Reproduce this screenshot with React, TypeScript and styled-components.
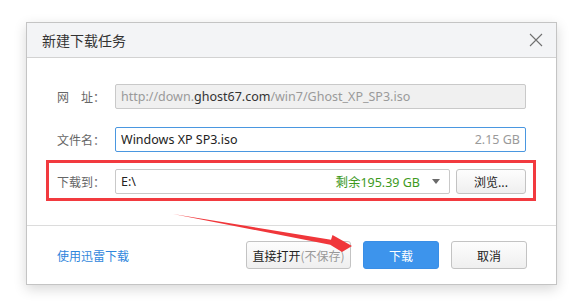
import styled, { createGlobalStyle } from "styled-components";

const GlobalStyle = createGlobalStyle`
  html, body {
    margin: 0;
    padding: 0;
    background: #ffffff;
  }
  body {
    font-family: "Noto Sans", "Noto Sans CJK SC", sans-serif;
    font-size: 12px;
    color: #333;
  }
`;

const Page = styled.div`
  position: relative;
  width: 580px;
  height: 307px;
  padding: 22px 0 0 26px;
  box-sizing: border-box;
`;

const Dialog = styled.div`
  width: 531px;
  height: 263px;
  box-sizing: border-box;
  border: 1px solid #c4c4c4;
  background: #fff;
  box-shadow: 0 4px 12px rgba(0, 0, 0, 0.16);
  display: flex;
  flex-direction: column;
`;

const TitleBar = styled.div`
  height: 34px;
  background: #f3f4f6;
  border-bottom: 1px solid #d2d2d2;
  display: flex;
  align-items: center;
  justify-content: space-between;
  padding: 0 13px 0 15px;
`;

const Title = styled.span`
  font-family: "Noto Sans CJK SC", sans-serif;
  font-size: 14px;
  color: #333;
`;

const CloseButton = styled.button`
  border: none;
  background: none;
  padding: 0;
  width: 14px;
  height: 14px;
  display: flex;
  cursor: pointer;
`;

const Body = styled.div`
  flex: 1;
  padding: 26px 30px 0 30px;
  display: flex;
  flex-direction: column;
`;

const Row = styled.div<{ $highlight?: boolean }>`
  display: flex;
  align-items: center;
  margin-top: ${(p) => (p.$highlight ? "8px" : "0")};
  margin-bottom: ${(p) => (p.$highlight ? "0" : "18px")};
  ${(p) =>
    p.$highlight &&
    `
    margin-left: -11px;
    margin-right: -10px;
    padding: 6px 7px 4px 8px;
    border: 3px solid #f23a3f;
  `}
  &:nth-child(2) {
    margin-bottom: 0;
  }
`;

const Label = styled.label`
  width: 58px;
  flex: none;
  font-family: "Noto Sans CJK SC", sans-serif;
  font-size: 12px;
  color: #666;
  white-space: pre;
`;

const Field = styled.div<{ $disabled?: boolean; $focused?: boolean }>`
  flex: 1;
  height: 25px;
  box-sizing: border-box;
  border: 1px solid
    ${(p) => (p.$focused ? "#4a97e0" : "#c9c9c9")};
  border-radius: 2px;
  background: ${(p) => (p.$disabled ? "#f0f0f0" : "#fff")};
  display: flex;
  align-items: center;
  padding: 0 5px 0 5px;
  font-size: 12.5px;
  color: ${(p) => (p.$disabled ? "#9a9a9a" : "#222")};
  white-space: nowrap;
  overflow: hidden;
`;

const FieldText = styled.span`
  flex: 1;
  overflow: hidden;
`;

const Strong = styled.span`
  color: #333;
`;

const Aside = styled.span<{ $tone?: "grey" | "green" }>`
  color: ${(p) => (p.$tone === "green" ? "#3d9a1d" : "#9a9a9a")};
  font-family: "Noto Sans", "Noto Sans CJK SC", sans-serif;
`;

const Caret = styled.span`
  width: 0;
  height: 0;
  margin: 0 4px 0 12px;
  border-left: 4px solid transparent;
  border-right: 4px solid transparent;
  border-top: 5px solid #6a6a6a;
`;

const Footer = styled.div`
  height: 59px;
  box-sizing: border-box;
  border-top: 1px solid #dcdcdc;
  display: flex;
  align-items: center;
  padding: 0 29px 0 30px;
`;

const LinkText = styled.a`
  font-family: "Noto Sans CJK SC", sans-serif;
  font-size: 12px;
  color: #2f86dc;
  text-decoration: none;
  margin-right: auto;
`;

const Button = styled.button<{ $primary?: boolean; $w: number }>`
  width: ${(p) => p.$w}px;
  height: 28px;
  flex: none;
  box-sizing: border-box;
  border-radius: 3px;
  border: 1px solid ${(p) => (p.$primary ? "#3a8ee6" : "#c3c3c3")};
  background: ${(p) =>
    p.$primary
      ? "#3d94ec"
      : "linear-gradient(#fdfdfd, #efefef)"};
  color: ${(p) => (p.$primary ? "#fff" : "#222")};
  font-family: "Noto Sans CJK SC", sans-serif;
  font-size: 12px;
  padding: 0;
  margin-left: 12px;
  display: flex;
  align-items: center;
  justify-content: center;
  cursor: pointer;
`;

const SmallButton = styled(Button)`
  height: 25px;
  margin-left: 6px;
`;

const Muted = styled.span`
  color: #999;
`;

const Arrow = styled.svg`
  position: absolute;
  left: 0;
  top: 0;
  pointer-events: none;
`;

export default function App() {
  return (
    <>
      <GlobalStyle />
      <Page>
        <Dialog>
          <TitleBar>
            <Title>新建下载任务</Title>
            <CloseButton aria-label="关闭">
              <svg width="14" height="14" viewBox="0 0 14 14">
                <path d="M1 1 L13 13 M13 1 L1 13" stroke="#707070" strokeWidth="1.1" />
              </svg>
            </CloseButton>
          </TitleBar>
          <Body>
            <Row>
              <Label>网　址：</Label>
              <Field $disabled>
                <FieldText>
                  http://down.<Strong>ghost67.com</Strong>/win7/Ghost_XP_SP3.iso
                </FieldText>
              </Field>
            </Row>
            <Row>
              <Label>文件名：</Label>
              <Field $focused>
                <FieldText>Windows XP SP3.iso</FieldText>
                <Aside $tone="grey">2.15 GB</Aside>
              </Field>
            </Row>
            <Row $highlight>
              <Label>下载到：</Label>
              <Field>
                <FieldText>E:\</FieldText>
                <Aside $tone="green">剩余195.39 GB</Aside>
                <Caret />
              </Field>
              <SmallButton $w={70}>浏览...</SmallButton>
            </Row>
          </Body>
          <Footer>
            <LinkText href="#">使用迅雷下载</LinkText>
            <Button $w={105}>
              直接打开<Muted>(不保存)</Muted>
            </Button>
            <Button $primary $w={76}>下载</Button>
            <Button $w={76}>取消</Button>
          </Footer>
        </Dialog>
        <Arrow width="580" height="307" viewBox="0 0 580 307">
          <polygon
            points="173,214 331,239.7 332.5,235 352,246 342,252 330.2,244.7"
            fill="#f0363a"
          />
        </Arrow>
      </Page>
    </>
  );
}
